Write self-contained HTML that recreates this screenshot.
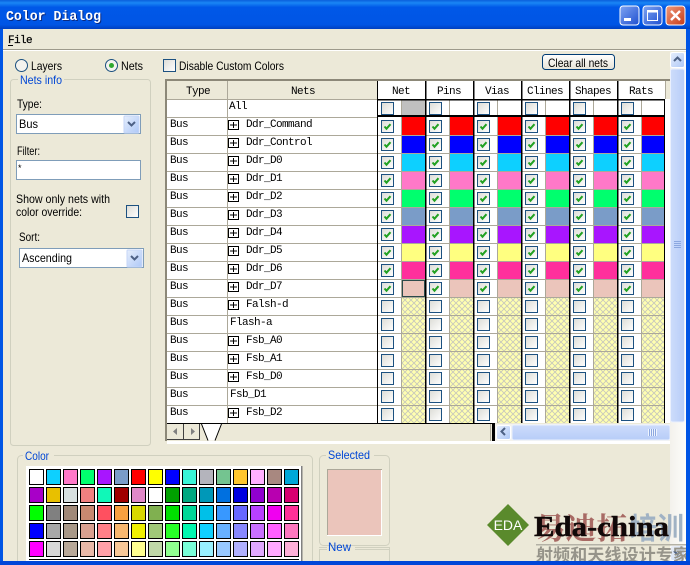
<!DOCTYPE html>
<html><head><meta charset="utf-8"><style>
html,body{margin:0;padding:0;width:690px;height:565px;overflow:hidden;background:#ece9d8}
svg{display:block}
.u{font:12px "Liberation Sans",sans-serif;fill:#000}
.b{font:12px "Liberation Sans",sans-serif;fill:#0046d5}
.m{font:11px "Liberation Mono",monospace;fill:#000;letter-spacing:-.6px}
.h{font:11px "Liberation Mono",monospace;fill:#000;text-anchor:middle;letter-spacing:-.6px}
</style></head><body>
<svg width="690" height="565" viewBox="0 0 690 565" xmlns="http://www.w3.org/2000/svg">
<defs>
<linearGradient id="tb" x1="0" y1="0" x2="0" y2="1"><stop offset="0" stop-color="#0a5fdc"/><stop offset=".1" stop-color="#1a86f5"/><stop offset=".25" stop-color="#0058e8"/><stop offset=".85" stop-color="#0055e5"/><stop offset="1" stop-color="#0040c0"/></linearGradient>
<linearGradient id="cb" x1="0" y1="0" x2="1" y2="1"><stop offset="0" stop-color="#dcdcd6"/><stop offset="1" stop-color="#fff"/></linearGradient>
<linearGradient id="sb" x1="0" y1="0" x2="1" y2="1"><stop offset="0" stop-color="#e6eefc"/><stop offset="1" stop-color="#aec8f7"/></linearGradient>
<linearGradient id="sv" x1="0" y1="0" x2="1" y2="0"><stop offset="0" stop-color="#cddcfb"/><stop offset="1" stop-color="#b7cdf8"/></linearGradient>
<linearGradient id="sh" x1="0" y1="0" x2="0" y2="1"><stop offset="0" stop-color="#cddcfb"/><stop offset="1" stop-color="#b7cdf8"/></linearGradient>
<linearGradient id="wb" x1="0" y1="0" x2="1" y2="1"><stop offset="0" stop-color="#7fa4f2"/><stop offset="1" stop-color="#1f50d0"/></linearGradient>
<linearGradient id="cl" x1="0" y1="0" x2="1" y2="1"><stop offset="0" stop-color="#ef9a7c"/><stop offset="1" stop-color="#c63a16"/></linearGradient>
<linearGradient id="bt" x1="0" y1="0" x2="0" y2="1"><stop offset="0" stop-color="#fff"/><stop offset="1" stop-color="#e6e3d6"/></linearGradient>
<linearGradient id="tr" x1="0" y1="0" x2="1" y2="0"><stop offset="0" stop-color="#f3f1ec"/><stop offset="1" stop-color="#fdfdfa"/></linearGradient>
<pattern id="hatch" width="6" height="6" patternUnits="userSpaceOnUse"><rect width="6" height="6" fill="#ffffb0"/><path d="M0 0L6 6M6 0L0 6" stroke="#c8c8bc" stroke-width=".9"/></pattern>
<rect id="s" width="14" height="15" stroke="#000" stroke-width="1"/>
<g id="box"><rect x="381.5" y="3.5" width="12" height="12" fill="url(#cb)" stroke="#1c5180"/></g>
<g id="ck"><path d="M384.5 9.5l2 2.2 4-4.5" fill="none" stroke="#21a121" stroke-width="2"/></g>
<g id="col"><rect x="377" y="0" width="48" height="18" fill="#fff" style="fill:#fff"/><rect x="402" y="0" width="23" height="18"/><rect x="401" y="0" width="1" height="18" fill="#aca899" style="fill:#aca899"/><use href="#box"/></g>
<g id="rw"><use href="#col"/><use href="#col" x="48"/><use href="#col" x="96"/><use href="#col" x="144"/><use href="#col" x="192"/><use href="#col" x="240"/></g>
<g id="rc"><use href="#rw"/><use href="#ck"/><use href="#ck" x="48"/><use href="#ck" x="96"/><use href="#ck" x="144"/><use href="#ck" x="192"/><use href="#ck" x="240"/></g>
<g id="pl"><rect x="0.5" y="0.5" width="10" height="9" fill="#fff" stroke="#000"/><path d="M2 5h7M5.5 2v6" stroke="#000"/></g>
</defs>

<rect width="690" height="565" fill="#ece9d8"/>

<!-- left panels -->
<rect x="10.5" y="79.5" width="140" height="366" rx="3" fill="none" stroke="#d0d0bf"/>
<rect x="18" y="76" width="46" height="8" fill="#ece9d8"/>
<text class="b" x="20" y="84" textLength="42" lengthAdjust="spacingAndGlyphs">Nets info</text>

<circle cx="21.5" cy="65.5" r="6" fill="#f4f3ee" stroke="#1c5180"/>
<text class="u" x="31" y="70" textLength="31" lengthAdjust="spacingAndGlyphs">Layers</text>
<circle cx="111.5" cy="65.5" r="6" fill="#f4f3ee" stroke="#1c5180"/>
<circle cx="111.5" cy="65.5" r="2.5" fill="#2fa82f"/>
<text class="u" x="121" y="70" textLength="22" lengthAdjust="spacingAndGlyphs">Nets</text>
<rect x="163.5" y="59.5" width="12" height="12" fill="url(#cb)" stroke="#1c5180"/>
<text class="u" x="179" y="70" textLength="105" lengthAdjust="spacingAndGlyphs">Disable Custom Colors</text>

<text class="u" x="17" y="108" textLength="25" lengthAdjust="spacingAndGlyphs">Type:</text>
<rect x="16.5" y="114.5" width="124" height="19" fill="#fff" stroke="#7f9db9"/>
<text class="u" x="19" y="128" textLength="19" lengthAdjust="spacingAndGlyphs">Bus</text>
<rect x="124" y="116" width="15" height="17" rx="1" fill="url(#sb)" stroke="#c6d6f7"/>
<path d="M128 122l3.5 3.5 3.5-3.5" fill="none" stroke="#4d6185" stroke-width="2"/>

<text class="u" x="17" y="155" textLength="23" lengthAdjust="spacingAndGlyphs">Filter:</text>
<rect x="16.5" y="160.5" width="124" height="19" fill="#fff" stroke="#7f9db9"/>
<text class="u" x="18" y="171" style="font-size:9px">*</text>

<text class="u" x="16" y="203" textLength="94" lengthAdjust="spacingAndGlyphs">Show only nets with</text>
<text class="u" x="16" y="216" textLength="66" lengthAdjust="spacingAndGlyphs">color override:</text>
<rect x="126.5" y="205.5" width="12" height="12" fill="url(#cb)" stroke="#1c5180"/>

<text class="u" x="19" y="241" textLength="21" lengthAdjust="spacingAndGlyphs">Sort:</text>
<rect x="19.5" y="248.5" width="124" height="19" fill="#fff" stroke="#7f9db9"/>
<text class="u" x="22" y="262" textLength="50" lengthAdjust="spacingAndGlyphs">Ascending</text>
<rect x="127" y="250" width="15" height="17" rx="1" fill="url(#sb)" stroke="#c6d6f7"/>
<path d="M131 256l3.5 3.5 3.5-3.5" fill="none" stroke="#4d6185" stroke-width="2"/>

<!-- clear button -->
<rect x="542.5" y="54.5" width="72" height="15" rx="3" fill="url(#bt)" stroke="#003c74"/>
<text class="u" x="548" y="67" textLength="60" lengthAdjust="spacingAndGlyphs">Clear all nets</text>

<!-- table frame -->
<rect x="165" y="79" width="505" height="2" fill="#8c8878"/>
<rect x="165" y="79" width="2" height="362" fill="#8c8878"/>
<rect x="167" y="81" width="210" height="18" fill="#ece9d8"/>
<rect x="167" y="99" width="210" height="324" fill="#fff"/>
<rect x="227" y="81" width="1" height="342" fill="#aca899"/>
<rect x="167" y="99" width="210" height="1" fill="#aca899"/>
<text class="h" x="198" y="94">Type</text>
<text class="h" x="303" y="94">Nets</text>

<rect x="377" y="81" width="288" height="18" fill="#fff"/>
<text class="h" x="401" y="94">Net</text>
<text class="h" x="449" y="94">Pins</text>
<text class="h" x="497" y="94">Vias</text>
<text class="h" x="545" y="94">Clines</text>
<text class="h" x="593" y="94">Shapes</text>
<text class="h" x="641" y="94">Rats</text>

<use href="#rw" y="99" fill="#fff"/>
<rect x="402" y="100" width="23" height="15" fill="#c0c0c0"/>

<!-- rows -->
<use href="#rc" y="117" fill="#ff0000"/>
<use href="#rc" y="135" fill="#0000ff"/>
<use href="#rc" y="153" fill="#0dd0ff"/>
<use href="#rc" y="171" fill="#ff78c8"/>
<use href="#rc" y="189" fill="#00ff6e"/>
<use href="#rc" y="207" fill="#7a9cc8"/>
<use href="#rc" y="225" fill="#a815ff"/>
<use href="#rc" y="243" fill="#ffff80"/>
<use href="#rc" y="261" fill="#ff2f9c"/>
<use href="#rc" y="279" fill="#ebc5bb"/>
<use href="#rw" y="297" fill="url(#hatch)"/>
<use href="#rw" y="315" fill="url(#hatch)"/>
<use href="#rw" y="333" fill="url(#hatch)"/>
<use href="#rw" y="351" fill="url(#hatch)"/>
<use href="#rw" y="369" fill="url(#hatch)"/>
<use href="#rw" y="387" fill="url(#hatch)"/>
<use href="#rw" y="405" fill="url(#hatch)"/>
<rect x="402.5" y="280.5" width="22" height="16" fill="none" stroke="#2c4a4a"/>

<!-- grid lines -->
<path d="M167 117.5H377M167 135.5H665M167 153.5H665M167 171.5H665M167 189.5H665M167 207.5H665M167 225.5H665M167 243.5H665M167 261.5H665M167 279.5H665M167 297.5H665M167 315.5H665M167 333.5H665M167 351.5H665M167 369.5H665M167 387.5H665M167 405.5H665" stroke="#aca899" stroke-width="1"/>
<rect x="377" y="99" width="288" height="1.5" fill="#000"/>
<rect x="377" y="115" width="288" height="2" fill="#000"/>
<rect x="377" y="81" width="1" height="342" fill="#000"/>
<rect x="425" y="81" width="1.5" height="342" fill="#000"/>
<rect x="473" y="81" width="1.5" height="342" fill="#000"/>
<rect x="521" y="81" width="1.5" height="342" fill="#000"/>
<rect x="569" y="81" width="1.5" height="342" fill="#000"/>
<rect x="617" y="81" width="1.5" height="342" fill="#000"/>
<rect x="664" y="99" width="1.5" height="324" fill="#000"/>
<rect x="665" y="81" width="1" height="18" fill="#aca899"/>
<rect x="665" y="99" width="5" height="324" fill="#fff"/>

<text class="m" x="229" y="109">All</text>
<text class="m" x="170" y="127">Bus</text><use href="#pl" x="228" y="120"/><text class="m" x="246" y="127">Ddr_Command</text>
<text class="m" x="170" y="145">Bus</text><use href="#pl" x="228" y="138"/><text class="m" x="246" y="145">Ddr_Control</text>
<text class="m" x="170" y="163">Bus</text><use href="#pl" x="228" y="156"/><text class="m" x="246" y="163">Ddr_D0</text>
<text class="m" x="170" y="181">Bus</text><use href="#pl" x="228" y="174"/><text class="m" x="246" y="181">Ddr_D1</text>
<text class="m" x="170" y="199">Bus</text><use href="#pl" x="228" y="192"/><text class="m" x="246" y="199">Ddr_D2</text>
<text class="m" x="170" y="217">Bus</text><use href="#pl" x="228" y="210"/><text class="m" x="246" y="217">Ddr_D3</text>
<text class="m" x="170" y="235">Bus</text><use href="#pl" x="228" y="228"/><text class="m" x="246" y="235">Ddr_D4</text>
<text class="m" x="170" y="253">Bus</text><use href="#pl" x="228" y="246"/><text class="m" x="246" y="253">Ddr_D5</text>
<text class="m" x="170" y="271">Bus</text><use href="#pl" x="228" y="264"/><text class="m" x="246" y="271">Ddr_D6</text>
<text class="m" x="170" y="289">Bus</text><use href="#pl" x="228" y="282"/><text class="m" x="246" y="289">Ddr_D7</text>
<text class="m" x="170" y="307">Bus</text><use href="#pl" x="228" y="300"/><text class="m" x="246" y="307">Falsh-d</text>
<text class="m" x="170" y="325">Bus</text><text class="m" x="230" y="325">Flash-a</text>
<text class="m" x="170" y="343">Bus</text><use href="#pl" x="228" y="336"/><text class="m" x="246" y="343">Fsb_A0</text>
<text class="m" x="170" y="361">Bus</text><use href="#pl" x="228" y="354"/><text class="m" x="246" y="361">Fsb_A1</text>
<text class="m" x="170" y="379">Bus</text><use href="#pl" x="228" y="372"/><text class="m" x="246" y="379">Fsb_D0</text>
<text class="m" x="170" y="397">Bus</text><text class="m" x="230" y="397">Fsb_D1</text>
<text class="m" x="170" y="415">Bus</text><use href="#pl" x="228" y="408"/><text class="m" x="246" y="415">Fsb_D2</text>

<!-- tab strip -->
<rect x="167" y="423" width="325" height="1" fill="#000"/>
<rect x="377" y="423" width="118" height="1" fill="#000"/>
<rect x="167" y="424" width="323" height="17" fill="#ece9d8"/>
<rect x="167" y="441" width="503" height="3" fill="#fff"/>
<rect x="167" y="424" width="17" height="16" fill="#ece9d8"/>
<path d="M183.5 424V439.5H167M199.5 424V439.5H184" fill="none" stroke="#404040"/>
<path d="M177 428v7l-4-3.5zM191 428v7l4-3.5z" fill="#808080"/>
<path d="M201.5 424L208 440.5H215L221.5 424z" fill="#fff"/>
<path d="M201.5 424L208 440.5M221.5 424L215 440.5" fill="none" stroke="#000"/>
<rect x="490" y="424" width="1" height="17" fill="#aca899"/>
<rect x="492" y="424" width="3" height="17" fill="#000"/>

<!-- scrollbars -->
<rect x="495" y="424" width="175" height="17" fill="#f4f3ee"/>
<rect x="496.5" y="425.5" width="14" height="14" rx="2" fill="url(#sb)" stroke="#fff"/>
<path d="M505 428l-3.5 3.5 3.5 3.5" fill="none" stroke="#4d6185" stroke-width="2"/>
<rect x="512" y="425" width="158" height="15" rx="2" fill="url(#sh)" stroke="#eaf0fd"/>
<path d="M648.5 429v7M650.5 429v7M652.5 429v7M654.5 429v7M656.5 429v7" stroke="#eef4fe"/>
<path d="M649.5 429v7M651.5 429v7M653.5 429v7M655.5 429v7" stroke="#8ca8e0"/>

<rect x="670" y="52" width="16" height="509" fill="url(#tr)"/>
<rect x="670.5" y="52.5" width="14" height="15" rx="2" fill="url(#sb)" stroke="#fff"/>
<path d="M674 61l3.5-3.5 3.5 3.5" fill="none" stroke="#4d6185" stroke-width="2"/>
<rect x="670.5" y="69" width="14" height="353" rx="2" fill="url(#sv)" stroke="#eaf0fd"/>
<path d="M674 241.5h7M674 243.5h7M674 245.5h7M674 247.5h7" stroke="#8ca8e0"/>

<!-- color group -->
<rect x="17.5" y="455.5" width="295" height="120" rx="4" fill="none" stroke="#d0d0bf"/>
<rect x="23" y="450" width="31" height="10" fill="#ece9d8"/>
<text class="b" x="25" y="460" textLength="24" lengthAdjust="spacingAndGlyphs">Color</text>
<rect x="26" y="466" width="276" height="95" fill="#fff"/>
<rect x="301" y="466" width="1.5" height="95" fill="#808080"/>
<g>
<use href="#s" x="29.5" y="469.5" fill="#ffffff"/><use href="#s" x="46.5" y="469.5" fill="#0dd0ff"/><use href="#s" x="63.5" y="469.5" fill="#ff78c8"/><use href="#s" x="80.5" y="469.5" fill="#00ff6e"/><use href="#s" x="97.5" y="469.5" fill="#a815ff"/><use href="#s" x="114.5" y="469.5" fill="#7a9cc8"/><use href="#s" x="131.5" y="469.5" fill="#ff0000"/><use href="#s" x="148.5" y="469.5" fill="#ffff00"/><use href="#s" x="165.5" y="469.5" fill="#0000ff"/><use href="#s" x="182.5" y="469.5" fill="#38f5d8"/><use href="#s" x="199.5" y="469.5" fill="#b4b4bc"/><use href="#s" x="216.5" y="469.5" fill="#74c490"/><use href="#s" x="233.5" y="469.5" fill="#ffc62e"/><use href="#s" x="250.5" y="469.5" fill="#ffb0ff"/><use href="#s" x="267.5" y="469.5" fill="#a88880"/><use href="#s" x="284.5" y="469.5" fill="#00a8d8"/>
<use href="#s" x="29.5" y="487.5" fill="#a800c8"/><use href="#s" x="46.5" y="487.5" fill="#e8c000"/><use href="#s" x="63.5" y="487.5" fill="#d8e0e0"/><use href="#s" x="80.5" y="487.5" fill="#f08080"/><use href="#s" x="97.5" y="487.5" fill="#10f8b8"/><use href="#s" x="114.5" y="487.5" fill="#a00000"/><use href="#s" x="131.5" y="487.5" fill="#e088c8"/><use href="#s" x="148.5" y="487.5" fill="#ffffff"/><use href="#s" x="165.5" y="487.5" fill="#00a000"/><use href="#s" x="182.5" y="487.5" fill="#00a880"/><use href="#s" x="199.5" y="487.5" fill="#0098b8"/><use href="#s" x="216.5" y="487.5" fill="#0070e0"/><use href="#s" x="233.5" y="487.5" fill="#0000e0"/><use href="#s" x="250.5" y="487.5" fill="#9000d0"/><use href="#s" x="267.5" y="487.5" fill="#b800b0"/><use href="#s" x="284.5" y="487.5" fill="#d80070"/>
<use href="#s" x="29.5" y="505.5" fill="#00ff00"/><use href="#s" x="46.5" y="505.5" fill="#808080"/><use href="#s" x="63.5" y="505.5" fill="#a08878"/><use href="#s" x="80.5" y="505.5" fill="#c88870"/><use href="#s" x="97.5" y="505.5" fill="#ff5060"/><use href="#s" x="114.5" y="505.5" fill="#f8a040"/><use href="#s" x="131.5" y="505.5" fill="#d8d800"/><use href="#s" x="148.5" y="505.5" fill="#80b050"/><use href="#s" x="165.5" y="505.5" fill="#00e000"/><use href="#s" x="182.5" y="505.5" fill="#00d898"/><use href="#s" x="199.5" y="505.5" fill="#00c0e8"/><use href="#s" x="216.5" y="505.5" fill="#3898ff"/><use href="#s" x="233.5" y="505.5" fill="#6868ff"/><use href="#s" x="250.5" y="505.5" fill="#b840ff"/><use href="#s" x="267.5" y="505.5" fill="#f000f0"/><use href="#s" x="284.5" y="505.5" fill="#ff3098"/>
<use href="#s" x="29.5" y="523.5" fill="#0000ff"/><use href="#s" x="46.5" y="523.5" fill="#a8a8a8"/><use href="#s" x="63.5" y="523.5" fill="#a89888"/><use href="#s" x="80.5" y="523.5" fill="#d8a090"/><use href="#s" x="97.5" y="523.5" fill="#ff8088"/><use href="#s" x="114.5" y="523.5" fill="#f8b870"/><use href="#s" x="131.5" y="523.5" fill="#f0f000"/><use href="#s" x="148.5" y="523.5" fill="#a0c878"/><use href="#s" x="165.5" y="523.5" fill="#28ff28"/><use href="#s" x="182.5" y="523.5" fill="#00f8b0"/><use href="#s" x="199.5" y="523.5" fill="#10d0ff"/><use href="#s" x="216.5" y="523.5" fill="#68b0ff"/><use href="#s" x="233.5" y="523.5" fill="#8888ff"/><use href="#s" x="250.5" y="523.5" fill="#c870ff"/><use href="#s" x="267.5" y="523.5" fill="#ff60ff"/><use href="#s" x="284.5" y="523.5" fill="#ff78c0"/>
<use href="#s" x="29.5" y="541.5" fill="#ff00ff"/><use href="#s" x="46.5" y="541.5" fill="#d8d8d8"/><use href="#s" x="63.5" y="541.5" fill="#b8a898"/><use href="#s" x="80.5" y="541.5" fill="#e8b8a8"/><use href="#s" x="97.5" y="541.5" fill="#ffa0a8"/><use href="#s" x="114.5" y="541.5" fill="#f8c898"/><use href="#s" x="131.5" y="541.5" fill="#ffff90"/><use href="#s" x="148.5" y="541.5" fill="#c0d8a8"/><use href="#s" x="165.5" y="541.5" fill="#90ff90"/><use href="#s" x="182.5" y="541.5" fill="#78ffd8"/><use href="#s" x="199.5" y="541.5" fill="#98f0ff"/><use href="#s" x="216.5" y="541.5" fill="#98c8ff"/><use href="#s" x="233.5" y="541.5" fill="#b0b0ff"/><use href="#s" x="250.5" y="541.5" fill="#e0a8ff"/><use href="#s" x="267.5" y="541.5" fill="#ffa8ff"/><use href="#s" x="284.5" y="541.5" fill="#ffb0d8"/>
</g>
<rect x="29" y="559" width="270" height="1" fill="#000"/>

<!-- selected -->
<rect x="319.5" y="455.5" width="70" height="90" rx="4" fill="none" stroke="#d0d0bf"/>
<rect x="326" y="450" width="48" height="10" fill="#ece9d8"/>
<text class="b" x="328" y="459" textLength="42" lengthAdjust="spacingAndGlyphs">Selected</text>
<rect x="327" y="469" width="55" height="67" fill="#fff"/>
<rect x="327" y="469" width="54" height="66" fill="#ebc5bb"/>
<path d="M327 469.5H382M327.5 469V535" stroke="#aca899"/>
<path d="M319 547.5h8M355 547.5h35M319 549.5h8M355 549.5h35" stroke="#d0d0bf"/>
<path d="M319.5 550v11M389.5 548v13" stroke="#d0d0bf"/>
<text class="b" x="328" y="551" textLength="23" lengthAdjust="spacingAndGlyphs">New</text>

<!-- logo -->
<path d="M508 504l21 21-21 21-21-21z" fill="#5a8a2c"/>
<text x="508" y="530" text-anchor="middle" style="font:14px 'Liberation Sans',sans-serif;fill:#fff">EDA</text>
<rect x="670.5" y="545.5" width="14" height="15" rx="2" fill="url(#sb)" stroke="#fff" opacity=".6"/>
<path d="M674 551l3.5 3.5 3.5-3.5" fill="none" stroke="#4d6185" stroke-width="2"/>
<text x="535" y="539" style="font:bold 30px 'Noto Serif CJK SC',serif;fill:#a86a64" textLength="92" lengthAdjust="spacingAndGlyphs">易迪拓</text>
<text x="630" y="539" style="font:bold 30px 'Noto Sans CJK SC',sans-serif;fill:#a0b2c4" textLength="54" lengthAdjust="spacingAndGlyphs">培训</text>
<text x="534" y="536" style="font:bold 29px 'Liberation Serif',serif;fill:#100808;stroke:#100808;stroke-width:.4" textLength="135" lengthAdjust="spacingAndGlyphs">Eda-china</text>
<rect x="536" y="544" width="150" height="1.5" fill="#b4b2a6"/>
<text x="536" y="561" style="font:bold 17px 'Noto Sans CJK SC',sans-serif;fill:#96948a" textLength="154">射频和天线设计专家</text>

<!-- menu + etch -->
<rect x="3" y="29" width="684" height="20" fill="#ece9d8"/>
<text x="8" y="43" style="font:11px 'Liberation Mono',monospace;fill:#000;stroke:#000;stroke-width:.2;letter-spacing:-.6px">File</text>
<rect x="8" y="45" width="5" height="1" fill="#000"/>
<rect x="3" y="49" width="684" height="1" fill="#9d9a8b"/>
<rect x="3" y="50" width="684" height="1" fill="#fff"/>

<!-- window frame -->
<rect x="0" y="0" width="690" height="29" fill="url(#tb)"/>
<rect x="0" y="29" width="3" height="536" fill="#0055e5"/>
<rect x="686" y="29" width="4" height="536" fill="#0055e5"/>
<rect x="0" y="561" width="690" height="4" fill="#0046d8"/>
<text x="7" y="21" style="font:bold 14px 'Liberation Mono',monospace;fill:#0a2a80" textLength="95" lengthAdjust="spacingAndGlyphs">Color Dialog</text>
<text x="6" y="20" style="font:bold 14px 'Liberation Mono',monospace;fill:#fff" textLength="95" lengthAdjust="spacingAndGlyphs">Color Dialog</text>

<rect x="620" y="6" width="19" height="19" rx="3" fill="url(#wb)" stroke="#fff"/>
<rect x="624" y="18" width="7" height="3" fill="#fff"/>
<rect x="643" y="6" width="19" height="19" rx="3" fill="url(#wb)" stroke="#fff"/>
<rect x="647.5" y="10.5" width="10" height="10" fill="none" stroke="#fff"/>
<rect x="647" y="10" width="11" height="2.5" fill="#fff"/>
<rect x="666" y="6" width="19" height="19" rx="3" fill="url(#cl)" stroke="#fff"/>
<path d="M671 11l9 9M680 11l-9 9" stroke="#fff" stroke-width="2.4"/>
</svg>
</body></html>
